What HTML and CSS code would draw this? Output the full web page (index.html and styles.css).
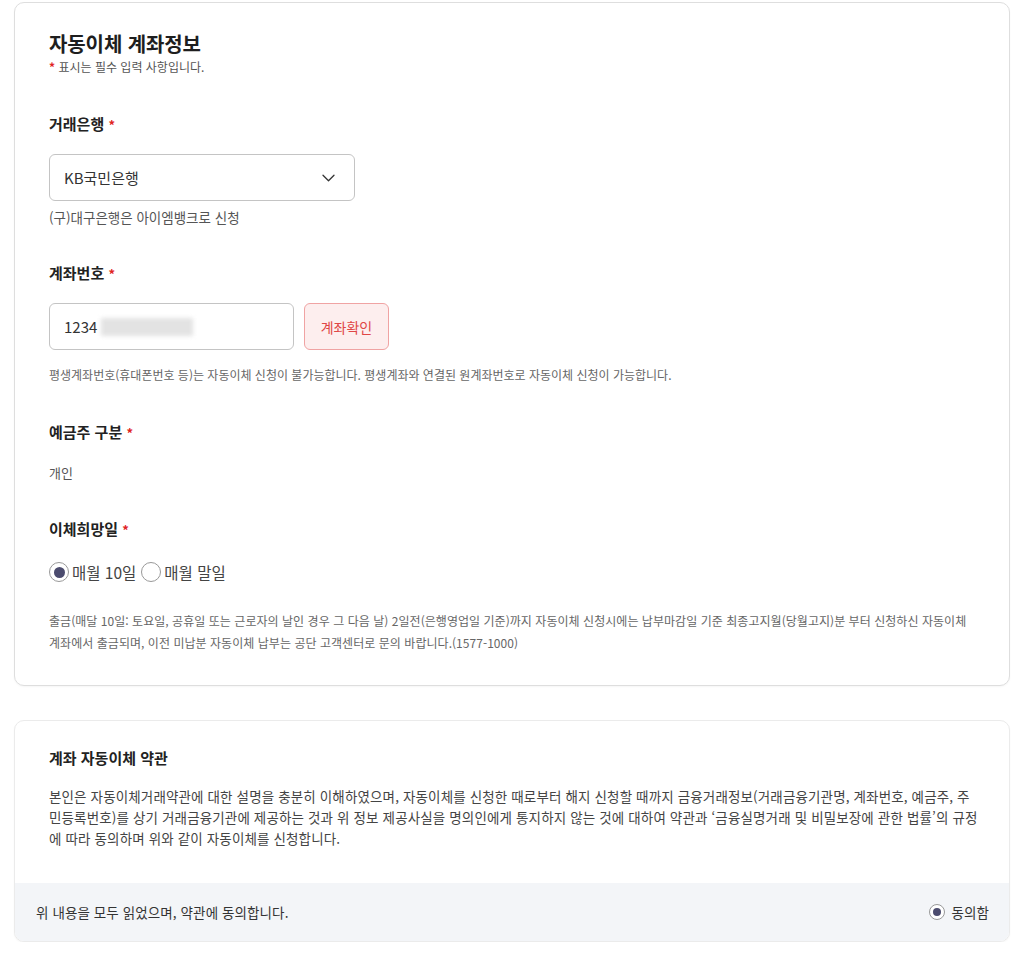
FILE: index.html
```html
<!DOCTYPE html>
<html lang="ko">
<head>
<meta charset="utf-8">
<title>자동이체 계좌정보</title>
<link rel="stylesheet" href="styles.css">
</head>
<body>
<div class="page">
  <section class="card info">
    <h2 class="title">자동이체 계좌정보</h2>
    <p class="req-note"><span class="star">*</span> 표시는 필수 입력 사항입니다.</p>

    <div class="label l-bank">거래은행 <span class="dot">*</span></div>
    <div class="select">
      <span>KB국민은행</span>
      <svg class="chev" width="13" height="8" viewBox="0 0 13 8"><path d="M1 1.2l5.5 5.5 5.5-5.5" fill="none" stroke="#333" stroke-width="1.3" stroke-linecap="round" stroke-linejoin="round"/></svg>
    </div>
    <p class="sub-note">(구)대구은행은 아이엠뱅크로 신청</p>

    <div class="label l-acct">계좌번호 <span class="dot">*</span></div>
    <div class="acct-row">
      <div class="input"><span>1234</span><span class="blur"></span></div>
      <button class="btn-check">계좌확인</button>
    </div>
    <p class="help">평생계좌번호(휴대폰번호 등)는 자동이체 신청이 불가능합니다. 평생계좌와 연결된 원계좌번호로 자동이체 신청이 가능합니다.</p>

    <div class="label l-owner">예금주 구분 <span class="dot">*</span></div>
    <p class="value">개인</p>

    <div class="label l-date">이체희망일 <span class="dot">*</span></div>
    <div class="radios">
      <label class="radio"><span class="circle on"></span>매월 10일</label>
      <label class="radio"><span class="circle"></span>매월 말일</label>
    </div>
    <p class="notice">출금(매달 10일: 토요일, 공휴일 또는 근로자의 날인 경우 그 다음 날) 2일전(은행영업일 기준)까지 자동이체 신청시에는 납부마감일 기준 최종고지월(당월고지)분 부터 신청하신 자동이체<br>계좌에서 출금되며, 이전 미납분 자동이체 납부는 공단 고객센터로 문의 바랍니다.(1577-1000)</p>
  </section>

  <section class="card terms">
    <div class="terms-body">
      <h3 class="terms-title">계좌 자동이체 약관</h3>
      <p class="terms-text">본인은 자동이체거래약관에 대한 설명을 충분히 이해하였으며, 자동이체를 신청한 때로부터 해지 신청할 때까지 금융거래정보(거래금융기관명, 계좌번호, 예금주, 주<br>민등록번호)를 상기 거래금융기관에 제공하는 것과 위 정보 제공사실을 명의인에게 통지하지 않는 것에 대하여 약관과 ‘금융실명거래 및 비밀보장에 관한 법률’의 규정<br>에 따라 동의하며 위와 같이 자동이체를 신청합니다.</p>
    </div>
    <div class="agree-bar">
      <span>위 내용을 모두 읽었으며, 약관에 동의합니다.</span>
      <label class="radio small"><span class="circle on sm"></span>동의함</label>
    </div>
  </section>
</div>
</body>
</html>
```
FILE: styles.css
```css
* { box-sizing: border-box; }
html, body { margin: 0; padding: 0; background: #fff; }
body {
  font-family: "Noto Sans CJK KR", "Noto Sans", sans-serif;
  color: #222;
}
.page { padding: 2px 14px 0; }
.card {
  border: 1px solid #dedede;
  border-radius: 10px;
  background: #fff;
  box-shadow: 0 1px 2px rgba(0,0,0,0.04);
}
.info { padding: 27px 34px 31px; }
.title { margin: 0; font-size: 20px; line-height: 28px; font-weight: 700; color: #1e1e1e; letter-spacing: -0.1px; }
.req-note { margin: 0; font-size: 12px; line-height: 18px; color: #555; }
.star { color: #e02424; font-weight: 700; }
.label { font-size: 15px; line-height: 22px; font-weight: 700; color: #222; }
.dot { color: #e02424; font-size: 13px; }
.l-bank { margin-top: 37px; }
.l-acct { margin-top: 35px; }
.l-owner { margin-top: 37px; }
.l-date { margin-top: 35px; }
.select {
  margin-top: 18px;
  width: 306px; height: 47px;
  border: 1px solid #c4c4c4; border-radius: 6px;
  display: flex; align-items: center; justify-content: space-between;
  padding: 0 19px 0 14px;
  font-size: 15px; color: #333;
}
.sub-note { margin: 6px 0 0; font-size: 13.5px; line-height: 20px; color: #555; }
.acct-row { margin-top: 18px; display: flex; gap: 10px; }
.input {
  width: 245px; height: 47px;
  border: 1px solid #c4c4c4; border-radius: 6px;
  display: flex; align-items: center; padding: 0 14px;
  font-size: 15px; color: #333;
}
.blur {
  display: inline-block; width: 92px; height: 18px; margin-left: 4px;
  background: #e3e3e3; filter: blur(2px);
}
.btn-check {
  width: 85px; height: 47px;
  border: 1px solid #f0a3a3; border-radius: 6px;
  background: #fdeeee; color: #e04646;
  font-family: inherit; font-size: 14px; padding: 0;
}
.help { margin: 16px 0 0; font-size: 12px; line-height: 18px; color: #666; }
.value { margin: 19px 0 0; font-size: 13px; line-height: 20px; color: #555; }
.radios { margin-top: 20px; display: flex; gap: 5px; height: 22px; align-items: center; }
.radio { display: flex; align-items: center; gap: 3px; font-size: 15.5px; color: #444; }
.circle {
  width: 20px; height: 20px; border-radius: 50%;
  border: 1px solid #999; background: #fff; position: relative; flex: none;
}
.circle.on::after {
  content: ""; position: absolute; left: 3.5px; top: 3.5px;
  width: 11px; height: 11px; border-radius: 50%; background: #4b4b6e;
}
.notice { margin: 27px -10px 0 0; font-size: 12px; line-height: 22px; color: #666; letter-spacing: 0.04px; }

.terms { margin-top: 34px; overflow: hidden; border-color: #ebebeb; }
.terms-body { padding: 26px 34px 34px; }
.terms-title { margin: 0; font-size: 15px; line-height: 22px; font-weight: 700; color: #222; }
.terms-text { margin: 17px -12px 0 0; font-size: 13.5px; line-height: 21px; color: #444; letter-spacing: 0.14px; }
.agree-bar {
  background: #f3f5f8; height: 58px;
  display: flex; align-items: center; justify-content: space-between;
  padding: 0 20px 0 21px;
  font-size: 13.5px; color: #333; letter-spacing: 0.1px;
}
.radio.small { font-size: 13.5px; color: #333; gap: 6px; }
.circle.sm { width: 16px; height: 16px; }
.circle.sm.on::after { left: 3px; top: 3px; width: 8px; height: 8px; }
```
